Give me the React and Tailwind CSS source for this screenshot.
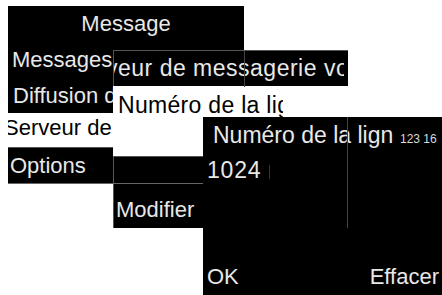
export default function App() {
  return (
    <div className="relative w-[442px] h-[295px] overflow-hidden bg-white font-['Liberation_Sans',Arial,sans-serif] text-[22px] leading-[36px] text-[#e8e8e8]">

      {/* ── Window 1: Message menu ── */}
      <div className="absolute left-[8px] top-[6px] w-[236px] flex flex-col">
        <div className="h-[36px] bg-black text-center">Message</div>
        <div className="h-[36px] bg-black pl-[4px] whitespace-nowrap overflow-hidden">Messages vocaux</div>
        <div className="h-[35px] bg-black pl-[5px] leading-[35px] whitespace-nowrap overflow-hidden">Diffusion de cellule</div>
        <div className="h-[34px] bg-white text-black leading-[30px] flex overflow-hidden">
          <span className="flex-shrink-0 whitespace-nowrap -ml-[4px]">Serveur de messagerie</span>
        </div>
        <div className="h-px bg-[#555]" />
        <div className="h-[35px] bg-black pl-[2px] leading-[35px] whitespace-nowrap overflow-hidden">Options</div>
        <div className="h-px bg-[#666]" />
      </div>

      {/* ── Window 2: Serveur de messagerie vocale ── */}
      <div className="absolute left-[113px] top-[50px] w-[235px] h-[178px] flex flex-col">
        <div className="relative h-[36px] bg-black border-t border-l border-[#555] text-[23px] leading-[35px]">
          <div className="w-[230px] flex overflow-hidden">
            <span className="flex-shrink-0 whitespace-nowrap -ml-[8px] tracking-[0.5px]">veur de messagerie vocale</span>
          </div>
          <div className="absolute left-[130px] top-0 h-[36px] w-px bg-[#444]" />
        </div>
        <div className="h-[70px] bg-white text-black text-[23px] pl-[5px] pt-[1px]">
          <div className="w-[165px] overflow-hidden whitespace-nowrap tracking-[0.3px]">Numéro de la ligne</div>
        </div>
        <div className="h-[27px] bg-black border-t border-l border-[#555]" />
        <div className="h-px bg-[#666]" />
        <div className="flex-1 bg-black border-l border-[#555] pl-[2px] pt-[8px]">Modifier</div>
      </div>

      {/* ── Window 3: Numéro de la ligne ── */}
      <div className="absolute left-[203px] top-[117px] right-0 bottom-0 bg-black flex flex-col">
        <div className="h-[35px] flex items-baseline whitespace-nowrap overflow-hidden">
          <span className="pl-[10px] w-[190px] flex-shrink-0 overflow-hidden text-[23px] leading-[36px]">Numéro de la ligne</span>
          <span className="ml-[7px] text-[12px] leading-[36px] text-[#d8d8d8]">123 16</span>
        </div>
        <div className="flex items-center pl-[4px] h-[36px]">
          <span className="text-[23px] tracking-[0.8px] leading-[36px]">1024</span>
          <span className="ml-[8px] mt-[4px] w-px h-[14px] bg-[#333]" />
        </div>
        <div className="flex-1" />
        <div className="h-[36px] flex justify-between pl-[4px] pr-[3px] leading-[36px]">
          <span>OK</span>
          <span>Effacer</span>
        </div>
      </div>

      {/* window 2 edge showing through */}
      <div className="absolute left-[347px] top-[117px] h-[111px] w-px bg-[#444]" />
    </div>
  );
}
